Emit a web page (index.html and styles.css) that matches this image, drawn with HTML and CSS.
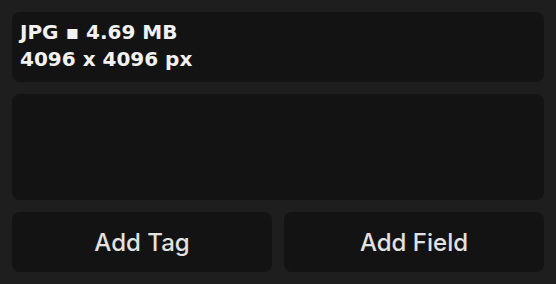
FILE: index.html
```html
<!DOCTYPE html>
<html>
<head>
<meta charset="utf-8">
<link rel="stylesheet" href="styles.css">
</head>
<body>
<div class="panel">
  <div class="card info">
    <div class="line">JPG ▪ 4.69 MB</div>
    <div class="line">4096 x 4096 px</div>
  </div>
  <div class="card empty"></div>
  <div class="actions">
    <button class="btn">Add Tag</button>
    <button class="btn">Add Field</button>
  </div>
</div>
</body>
</html>
```
FILE: styles.css
```css
html, body {
  margin: 0;
  padding: 0;
  background: #1e1e1e;
}
.panel {
  width: 556px;
  height: 284px;
  box-sizing: border-box;
  padding: 12px;
  display: flex;
  flex-direction: column;
  gap: 12px;
}
.card {
  background: #131313;
  border-radius: 8px;
}
.info {
  height: 70px;
  box-sizing: border-box;
  padding: 7px 8px;
  font-family: "DejaVu Sans", sans-serif;
  font-weight: bold;
  font-size: 20px;
  line-height: 27px;
  color: #f2f2f2;
}
.empty {
  height: 106px;
}
.actions {
  display: grid;
  grid-template-columns: 1fr 1fr;
  gap: 12px;
}
.btn {
  height: 60px;
  border: none;
  border-radius: 8px;
  background: #131313;
  color: #e2e2e2;
  font-family: Inter, sans-serif;
  font-size: 24px;
  font-weight: 500;
  padding: 0;
}
```
